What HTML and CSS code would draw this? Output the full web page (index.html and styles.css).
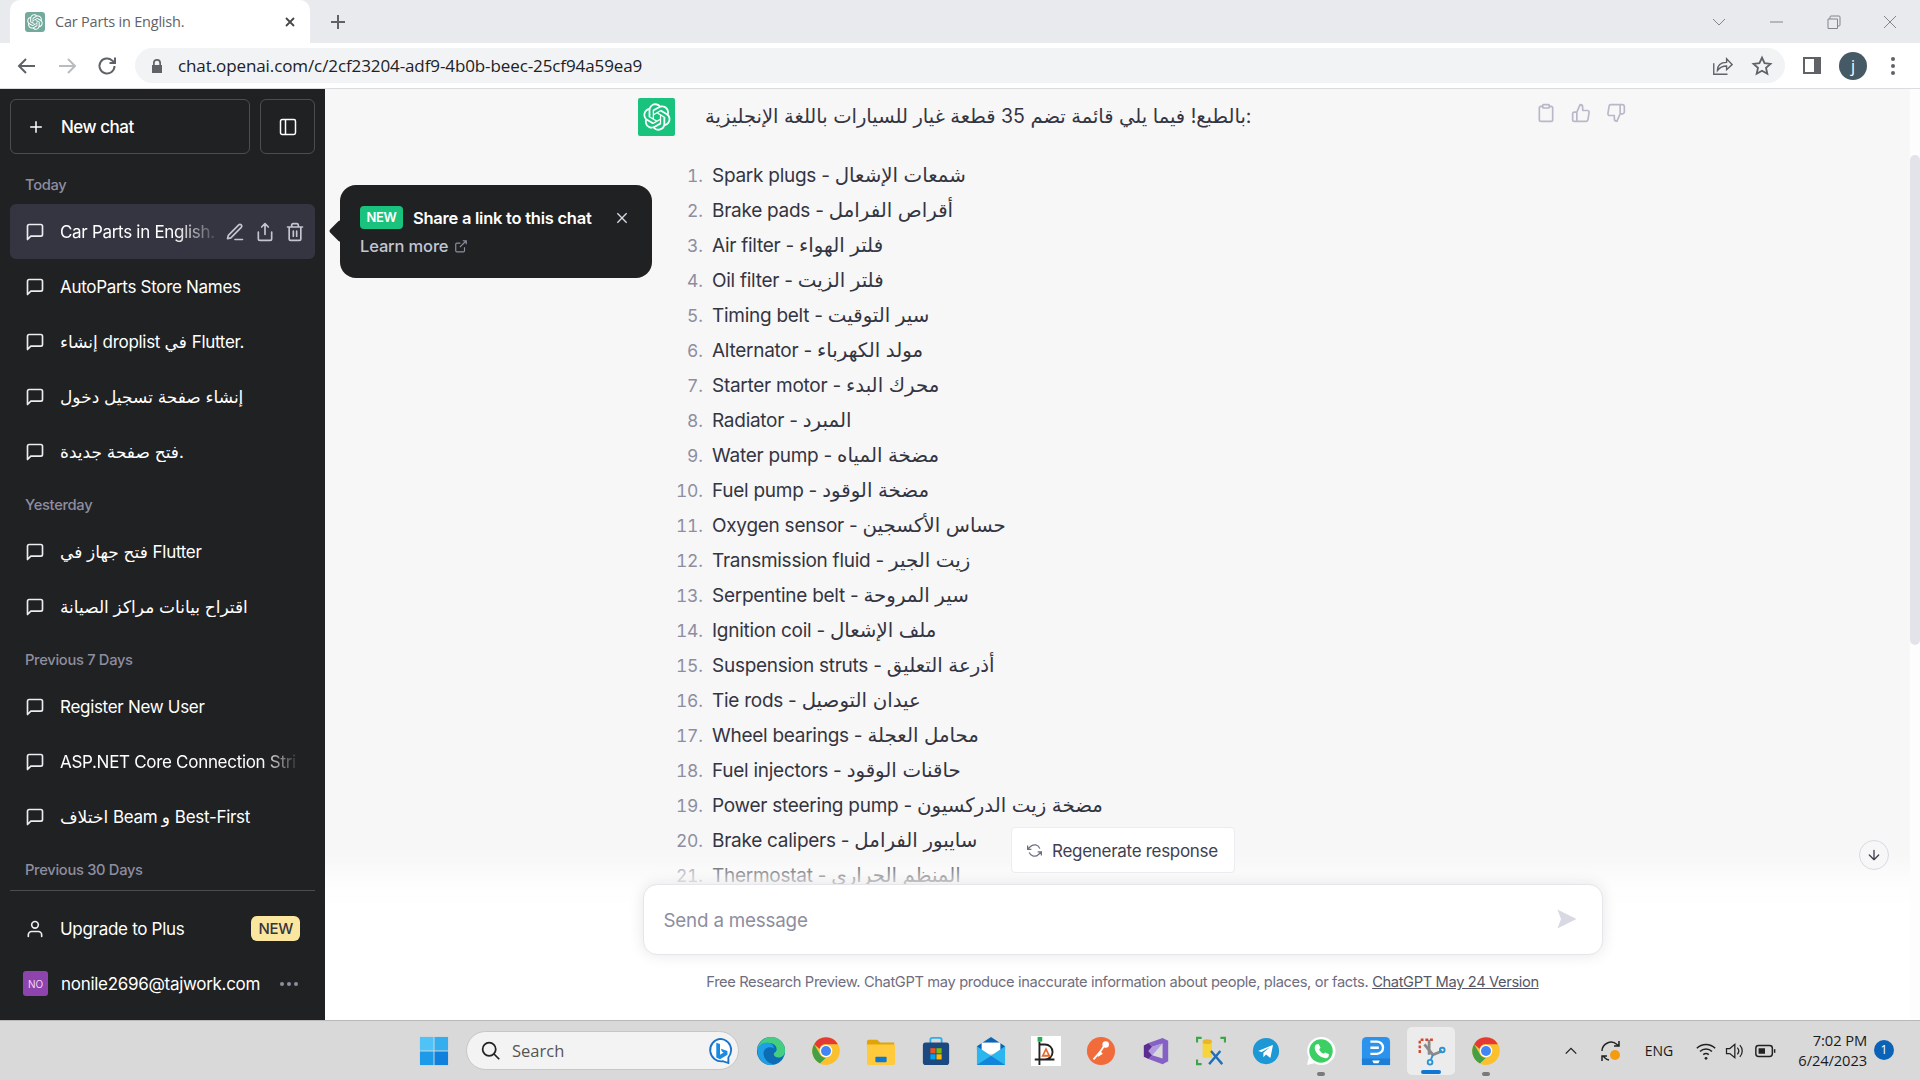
FILE: index.html
```html
<!DOCTYPE html>
<html lang="en">
<head>
<meta charset="utf-8">
<title>Car Parts in English.</title>
<link rel="stylesheet" href="styles.css">
</head>
<body>
<svg class="defs" width="0" height="0" aria-hidden="true">
  <symbol id="oai" viewBox="0 0 41 41"><path fill="currentColor" d="M37.5324 16.8707C37.9808 15.5241 38.1363 14.0974 37.9886 12.6859C37.8409 11.2744 37.3934 9.91076 36.676 8.68622C35.6126 6.83404 33.9882 5.3676 32.0373 4.4985C30.0864 3.62941 27.9098 3.40259 25.8215 3.85078C24.8796 2.7893 23.7219 1.94125 22.4257 1.36341C21.1295 0.785575 19.7249 0.491269 18.3058 0.500197C16.1708 0.495044 14.0893 1.16803 12.3614 2.42214C10.6335 3.67624 9.34853 5.44666 8.6917 7.47815C7.30085 7.76286 5.98686 8.3414 4.8377 9.17505C3.68854 10.0087 2.73073 11.0782 2.02839 12.312C0.956464 14.1591 0.498905 16.2988 0.721698 18.4228C0.944492 20.5467 1.83612 22.5449 3.268 24.1293C2.81966 25.4759 2.66413 26.9026 2.81182 28.3141C2.95951 29.7256 3.40701 31.0892 4.12437 32.3138C5.18791 34.1659 6.8123 35.6322 8.76321 36.5013C10.7141 37.3704 12.8907 37.5973 14.9789 37.1492C15.9208 38.2107 17.0786 39.0587 18.3747 39.6366C19.6709 40.2144 21.0755 40.5087 22.4946 40.4998C24.6307 40.5054 26.7133 39.8321 28.4418 38.5772C30.1704 37.3223 31.4556 35.5506 32.1119 33.5179C33.5027 33.2332 34.8167 32.6547 35.9659 31.821C37.115 30.9874 38.0728 29.9178 38.7752 28.684C39.8458 26.8371 40.3023 24.6979 40.0789 22.5748C39.8556 20.4517 38.9639 18.4544 37.5324 16.8707ZM22.4978 37.8849C20.7443 37.8874 19.0459 37.2733 17.6994 36.1501C17.7601 36.117 17.8666 36.0586 17.936 36.0161L25.9004 31.4156C26.1003 31.3019 26.2663 31.137 26.3813 30.9378C26.4964 30.7386 26.5563 30.5124 26.5549 30.2825V19.0542L29.9213 20.998C29.9389 21.0068 29.9541 21.0198 29.9656 21.0359C29.977 21.052 29.9842 21.0707 29.9867 21.0902V30.3889C29.9842 32.375 29.1946 34.2791 27.7909 35.6841C26.3872 37.0892 24.4838 37.8806 22.4978 37.8849ZM6.39227 31.0064C5.51397 29.4888 5.19742 27.7107 5.49804 25.9832C5.55718 26.0187 5.66048 26.0818 5.73461 26.1244L13.699 30.7248C13.8975 30.8408 14.1233 30.902 14.3532 30.902C14.583 30.902 14.8088 30.8408 15.0073 30.7248L24.731 25.1103V28.9979C24.7321 29.0177 24.7283 29.0376 24.7199 29.0556C24.7115 29.0736 24.6988 29.0893 24.6829 29.1012L16.6317 33.7497C14.9096 34.7416 12.8643 35.0097 10.9447 34.4954C9.02506 33.9811 7.38785 32.7263 6.39227 31.0064ZM4.29707 13.6194C5.17156 12.0998 6.55279 10.9364 8.19885 10.3327C8.19885 10.4013 8.19491 10.5228 8.19491 10.6071V19.808C8.19351 20.0378 8.25334 20.2638 8.36823 20.4629C8.48312 20.6619 8.64893 20.8267 8.84863 20.9404L18.5723 26.5542L15.206 28.4979C15.1894 28.5089 15.1703 28.5155 15.1505 28.5173C15.1307 28.5191 15.1107 28.516 15.0924 28.5082L7.04046 23.8557C5.32135 22.8601 4.06716 21.2235 3.55289 19.3046C3.03862 17.3858 3.30624 15.3413 4.29707 13.6194ZM31.955 20.0556L22.2312 14.4411L25.5976 12.4981C25.6142 12.4872 25.6333 12.4805 25.6531 12.4787C25.6729 12.4769 25.6928 12.4801 25.7111 12.4879L33.7631 17.1364C34.9967 17.849 36.0017 18.8982 36.6606 20.1613C37.3194 21.4244 37.6047 22.849 37.4832 24.2684C37.3617 25.6878 36.8382 27.0432 35.9743 28.1759C35.1103 29.3086 33.9415 30.1717 32.6047 30.6641C32.6047 30.5947 32.6047 30.4733 32.6047 30.3889V21.188C32.6066 20.9586 32.5474 20.7328 32.4332 20.5338C32.319 20.3348 32.154 20.1698 31.955 20.0556ZM35.3055 15.0128C35.2464 14.9765 35.1431 14.9142 35.069 14.8717L27.1045 10.2712C26.906 10.1554 26.6803 10.0943 26.4504 10.0943C26.2206 10.0943 25.9948 10.1554 25.7963 10.2712L16.0726 15.8858V11.9982C16.0715 11.9783 16.0753 11.9585 16.0837 11.9405C16.0921 11.9225 16.1048 11.9068 16.1207 11.8949L24.1719 7.25025C25.4053 6.53903 26.8158 6.19376 28.2383 6.25482C29.6608 6.31589 31.0364 6.78077 32.2044 7.59508C33.3723 8.40939 34.2842 9.53945 34.8334 10.8531C35.3826 12.1667 35.5464 13.6095 35.3055 15.0128ZM14.2424 21.9419L10.8752 19.9981C10.8576 19.9893 10.8423 19.9763 10.8309 19.9602C10.8195 19.9441 10.8122 19.9254 10.8098 19.9058V10.6071C10.8107 9.18295 11.2173 7.78848 11.9819 6.58696C12.7466 5.38544 13.8377 4.42659 15.1275 3.82264C16.4173 3.21869 17.8524 2.99464 19.2649 3.1767C20.6775 3.35876 22.0089 3.93941 23.1034 4.85067C23.0427 4.88379 22.937 4.94215 22.8668 4.98473L14.9024 9.58517C14.7025 9.69878 14.5366 9.86356 14.4215 10.0626C14.3065 10.2616 14.2466 10.4877 14.2479 10.7175L14.2424 21.9419ZM16.071 17.9991L20.4018 15.4978L24.7325 17.9975V22.9985L20.4018 25.4983L16.071 22.9985V17.9991Z"/></symbol>
  <symbol id="bubble" viewBox="0 0 24 24"><path fill="none" stroke="currentColor" stroke-width="2" stroke-linecap="round" stroke-linejoin="round" d="M21 15a2 2 0 0 1-2 2H7l-4 4V5a2 2 0 0 1 2-2h14a2 2 0 0 1 2 2z"/></symbol>
  <symbol id="chrome" viewBox="0 0 48 48"><circle cx="24" cy="24" r="22" fill="#fbc02d"/><path fill="#e53935" d="M24 2a22 22 0 0 1 19 11H24a11 11 0 0 0-10.500 7.500L5 13A22 22 0 0 1 24 2z"/><path fill="#43a047" d="M5 13l9.500 16.500A11 11 0 0 0 24 35l-9.500 9A22 22 0 0 1 5 13z"/><path fill="#fbc02d" d="M14.500 44l9.500-9a11 11 0 0 0 9.500-16.500H43A22 22 0 0 1 24 46a22 22 0 0 1-9.500-2z"/><circle cx="24" cy="24" r="10" fill="#fff"/><circle cx="24" cy="24" r="8" fill="#4285f4"/></symbol>
</svg>

<div class="app">
  <header class="tabstrip">
    <div class="tab">
      <span class="favicon"><svg class="favicon-svg"><use href="#oai"/></svg></span>
      <span class="tab-title">Car Parts in English.</span>
      <svg class="tab-x" viewBox="0 0 12 12"><path d="M2 2l8 8M10 2l-8 8"/></svg>
    </div>
    <svg class="tab-plus" viewBox="0 0 16 16"><path d="M8 1v14M1 8h14"/></svg>
    <div class="winctl">
      <svg class="wc" viewBox="0 0 16 16"><path d="M2 5l6 6 6-6"/></svg>
      <svg class="wc" viewBox="0 0 16 16"><path d="M2 8h13"/></svg>
      <svg class="wc" viewBox="0 0 16 16"><path d="M3 5h9.500v9.500H3zM5 5V3c0-.6.400-1 1-1h8c.6 0 1 .4 1 1v8c0 .6-.4 1-1 1h-1.500"/></svg>
      <svg class="wc" viewBox="0 0 16 16"><path d="M2 2l12 12M14 2L2 14"/></svg>
    </div>
  </header>

  <nav class="toolbar">
    <svg class="tb-ic" viewBox="0 0 24 24"><path d="M20 12H5M11 5l-7 7 7 7"/></svg>
    <svg class="tb-ic tb-ic-dim" viewBox="0 0 24 24"><path d="M4 12h15M13 5l7 7-7 7"/></svg>
    <svg class="tb-ic" viewBox="0 0 24 24"><path d="M19.500 12a7.500 7.500 0 1 1-2.300-5.400L20 9M20 3.500V9h-5.500"/></svg>
    <div class="omnibox">
      <svg class="lock" viewBox="0 0 16 16"><path d="M4 7V5a4 4 0 0 1 8 0v2h1v8H3V7zm1.700 0h4.600V5a2.300 2.300 0 0 0-4.600 0z"/></svg>
      <span class="url">chat.openai.com/c/2cf23204-adf9-4b0b-beec-25cf94a59ea9</span>
      <svg class="omni-ic" viewBox="0 0 24 24"><path d="M3 9v12h15M7 17c0-6 4-9 10-9V4l6 6.500L17 16v-4c-4.500 0-7.500 1.500-10 5z"/></svg>
      <svg class="omni-ic" viewBox="0 0 24 24"><path stroke-width="2" d="M12 3l2.800 6 6.400.7-4.800 4.300 1.400 6.500-5.800-3.300-5.800 3.300 1.400-6.500-4.800-4.300 6.400-.7z"/></svg>
    </div>
    <span class="panel-ic"><span class="panel-ic-in"></span></span>
    <span class="avatar">j</span>
    <span class="kebab"><i></i><i></i><i></i></span>
  </nav>

  <div class="workspace">
    <aside class="sidebar">
      <div class="side-top">
        <button class="btn-new"><svg class="ic-s" viewBox="0 0 24 24"><path d="M12 5v14M5 12h14"/></svg>New chat</button>
        <button class="btn-toggle"><svg class="ic-s" viewBox="0 0 24 24"><rect x="3" y="3" width="18" height="18" rx="2"/><path d="M9 3v18"/></svg></button>
      </div>
      <div class="history">
        <div class="label label-first">Today</div>
        <a class="row row-active"><svg class="ic-b"><use href="#bubble"/></svg><span class="row-text row-fade-active">Car Parts in English.</span>
          <span class="row-acts">
            <svg class="ic-a" viewBox="0 0 24 24"><path d="M12 21h9M16.500 3.500a2.100 2.100 0 0 1 3 3L7 19l-4 1 1-4z"/></svg>
            <svg class="ic-a" viewBox="0 0 24 24"><path d="M4 12v8a2 2 0 0 0 2 2h12a2 2 0 0 0 2-2v-8M16 6l-4-4-4 4M12 2v13"/></svg>
            <svg class="ic-a" viewBox="0 0 24 24"><path d="M3 6h18M19 6v14a2 2 0 0 1-2 2H7a2 2 0 0 1-2-2V6m3 0V4a2 2 0 0 1 2-2h4a2 2 0 0 1 2 2v2M10 11v6M14 11v6"/></svg>
          </span></a>
        <a class="row"><svg class="ic-b"><use href="#bubble"/></svg><span class="row-text">AutoParts Store Names</span></a>
        <a class="row"><svg class="ic-b"><use href="#bubble"/></svg><span class="row-text">إنشاء droplist في Flutter.</span></a>
        <a class="row"><svg class="ic-b"><use href="#bubble"/></svg><span class="row-text">إنشاء صفحة تسجيل دخول</span></a>
        <a class="row"><svg class="ic-b"><use href="#bubble"/></svg><span class="row-text">فتح صفحة جديدة.</span></a>
        <div class="label">Yesterday</div>
        <a class="row"><svg class="ic-b"><use href="#bubble"/></svg><span class="row-text">فتح جهاز في Flutter</span></a>
        <a class="row"><svg class="ic-b"><use href="#bubble"/></svg><span class="row-text">اقتراح بيانات مراكز الصيانة</span></a>
        <div class="label">Previous 7 Days</div>
        <a class="row"><svg class="ic-b"><use href="#bubble"/></svg><span class="row-text">Register New User</span></a>
        <a class="row"><svg class="ic-b"><use href="#bubble"/></svg><span class="row-text row-fade">ASP.NET Core Connection Stri</span></a>
        <a class="row"><svg class="ic-b"><use href="#bubble"/></svg><span class="row-text">اختلاف Beam و Best-First</span></a>
        <div class="label">Previous 30 Days</div>
      </div>
      <div class="side-foot">
        <a class="row"><svg class="ic-b" viewBox="0 0 24 24"><path fill="none" stroke="currentColor" stroke-width="2" stroke-linecap="round" d="M20 21v-2a4 4 0 0 0-4-4H8a4 4 0 0 0-4 4v2"/><circle cx="12" cy="7" r="4" fill="none" stroke="currentColor" stroke-width="2"/></svg><span class="row-text">Upgrade to Plus</span><span class="badge-plus">NEW</span></a>
        <a class="row row-user"><span class="user-pic">NO</span><span class="row-text">nonile2696@tajwork.com</span><span class="dots"><i></i><i></i><i></i></span></a>
      </div>
    </aside>

    <main class="main">
      <div class="thread">
        <div class="message">
          <span class="msg-logo"><svg class="msg-logo-svg"><use href="#oai"/></svg></span>
          <div class="msg-body">
            <p class="msg-lead">بالطبع! فيما يلي قائمة تضم 35 قطعة غيار للسيارات باللغة الإنجليزية:</p>
            <ol class="parts">
              <li>Spark plugs - <span class="ar">شمعات الإشعال</span></li>
              <li>Brake pads - <span class="ar">أقراص الفرامل</span></li>
              <li>Air filter - <span class="ar">فلتر الهواء</span></li>
              <li>Oil filter - <span class="ar">فلتر الزيت</span></li>
              <li>Timing belt - <span class="ar">سير التوقيت</span></li>
              <li>Alternator - <span class="ar">مولد الكهرباء</span></li>
              <li>Starter motor - <span class="ar">محرك البدء</span></li>
              <li>Radiator - <span class="ar">المبرد</span></li>
              <li>Water pump - <span class="ar">مضخة المياه</span></li>
              <li>Fuel pump - <span class="ar">مضخة الوقود</span></li>
              <li>Oxygen sensor - <span class="ar">حساس الأكسجين</span></li>
              <li>Transmission fluid - <span class="ar">زيت الجير</span></li>
              <li>Serpentine belt - <span class="ar">سير المروحة</span></li>
              <li>Ignition coil - <span class="ar">ملف الإشعال</span></li>
              <li>Suspension struts - <span class="ar">أذرعة التعليق</span></li>
              <li>Tie rods - <span class="ar">عيدان التوصيل</span></li>
              <li>Wheel bearings - <span class="ar">محامل العجلة</span></li>
              <li>Fuel injectors - <span class="ar">حاقنات الوقود</span></li>
              <li>Power steering pump - <span class="ar">مضخة زيت الدركسيون</span></li>
              <li>Brake calipers - <span class="ar">سايبور الفرامل</span></li>
              <li>Thermostat - <span class="ar">المنظم الحراري</span></li>
            </ol>
          </div>
          <div class="msg-acts">
            <svg class="ic-m" viewBox="0 0 24 24"><path d="M16 4h2a2 2 0 0 1 2 2v14a2 2 0 0 1-2 2H6a2 2 0 0 1-2-2V6a2 2 0 0 1 2-2h2"/><rect x="8" y="2" width="8" height="4" rx="1"/></svg>
            <svg class="ic-m" viewBox="0 0 24 24"><path d="M14 9V5a3 3 0 0 0-3-3l-4 9v11h11.300a2 2 0 0 0 2-1.700l1.400-9a2 2 0 0 0-2-2.300zM7 22H4a2 2 0 0 1-2-2v-7a2 2 0 0 1 2-2h3"/></svg>
            <svg class="ic-m" viewBox="0 0 24 24"><path d="M10 15v4a3 3 0 0 0 3 3l4-9V2H5.700a2 2 0 0 0-2 1.700l-1.400 9a2 2 0 0 0 2 2.300zM17 2h2.700A2.300 2.300 0 0 1 22 4v7a2.300 2.300 0 0 1-2.300 2H17"/></svg>
          </div>
        </div>
      </div>
      <div class="scrolltrack"><div class="scrollthumb"></div></div>

      <div class="tip">
        <div class="tip-head"><span class="tip-new">NEW</span><span class="tip-title">Share a link to this chat</span>
          <svg class="tip-x" viewBox="0 0 24 24"><path d="M5 5l14 14M19 5L5 19"/></svg></div>
        <div class="tip-more">Learn more <svg class="tip-ext" viewBox="0 0 24 24"><path d="M18 14v6a2 2 0 0 1-2 2H5a2 2 0 0 1-2-2V9a2 2 0 0 1 2-2h6M15 3h6v6M10 14L21 3"/></svg></div>
      </div>

      <button class="to-bottom"><svg class="ic-d" viewBox="0 0 24 24"><path d="M12 5v14M19 12l-7 7-7-7"/></svg></button>

      <div class="composer">
        <button class="regen"><svg class="ic-r" viewBox="0 0 24 24"><path d="M1 4v6h6M23 20v-6h-6M20.500 9A9 9 0 0 0 5.600 5.600L1 10m22 4l-4.600 4.400A9 9 0 0 1 3.500 15"/></svg>Regenerate response</button>
        <div class="input">
          <span class="placeholder">Send a message</span>
          <svg class="send" viewBox="0 0 20 20"><path d="M2 2l16 8-16 8 3-8z"/></svg>
        </div>
        <p class="disclaimer">Free Research Preview. ChatGPT may produce inaccurate information about people, places, or facts. <u>ChatGPT May 24 Version</u></p>
      </div>
    </main>
  </div>

  <footer class="taskbar">
    <span class="cell">
      <svg class="ti" viewBox="0 0 32 32"><g fill="#1c9fe8"><rect x="1" y="1" width="14.500" height="14.500" fill="#4fc3f7"/><rect x="16.500" y="1" width="14.500" height="14.500" fill="#35aef0"/><rect x="1" y="16.500" width="14.500" height="14.500" fill="#1e9be8"/><rect x="16.500" y="16.500" width="14.500" height="14.500" fill="#0f80dc"/></g></svg>
    </span>
    <div class="search">
      <svg class="search-ic" viewBox="0 0 24 24"><circle cx="10.500" cy="10.500" r="7.500"/><path d="M16 16l6 6"/></svg>
      <span class="search-text">Search</span>
      <svg class="bing" viewBox="0 0 28 30"><path fill="#fff" stroke="#1a73c9" stroke-width="2" d="M14 2a12 12 0 0 1 12 12 13 13 0 0 1-3 8v6l-6-2a12 12 0 1 1-3-24z"/><path fill="#1a8be0" d="M10 6l4 1.500V19l4-2.500-2-1-1-3 7 2.500v4l-8 5-4-2z"/></svg>
    </div>
    <span class="cell"><svg class="ti" viewBox="0 0 32 32"><circle cx="16" cy="16" r="15" fill="#0c6db5"/><path fill="#43cf7f" d="M16 1a15 15 0 0 1 15 15c0 4-3 7-7 7-3 0-5-1.500-5-3.500 0-2.500 3-2 3-5.500 0-4-4-6.500-8-6.500-6 0-10 4-13 8C2 8 8 1 16 1z"/><path fill="#1f9fe5" d="M1.500 14C3 9 8 7 12 7c4 0 7 3 7 6-4-2-10-1-11 5 0 6 5 12 12 12a15 15 0 0 1-4 1C8 31 1 24 1.500 14z"/></svg></span>
    <span class="cell"><svg class="ti"><use href="#chrome"/></svg></span>
    <span class="cell"><svg class="ti" viewBox="0 0 32 32"><path fill="#e0a30b" d="M1 6a2 2 0 0 1 2-2h9l3 3h15v4H1z"/><path fill="#ffcb3d" d="M1 9h30v20a2 2 0 0 1-2 2H3a2 2 0 0 1-2-2z"/><rect x="10" y="22" width="12" height="6" rx="1" fill="#0f78d4"/></svg></span>
    <span class="cell"><svg class="ti" viewBox="0 0 32 32"><path fill="none" stroke="#2fb0ea" stroke-width="2" d="M10 8V4a2 2 0 0 1 2-2h8a2 2 0 0 1 2 2v4"/><rect x="2" y="7" width="28" height="24" rx="3" fill="#1c4a80"/><rect x="10" y="13" width="5.500" height="5.500" fill="#f25022"/><rect x="16.500" y="13" width="5.500" height="5.500" fill="#7fba00"/><rect x="10" y="19.500" width="5.500" height="5.500" fill="#00a4ef"/><rect x="16.500" y="19.500" width="5.500" height="5.500" fill="#ffb900"/></svg></span>
    <span class="cell"><svg class="ti" viewBox="0 0 32 32"><path fill="#0a65b3" d="M16 1l15 10v4H1v-4z"/><path fill="#fff" d="M6 7h20v12H6z"/><path fill="#2bb6f0" d="M1 11l15 10 15-10v20H1z"/><path fill="#1285d8" d="M1 31l15-10 15 10z"/></svg></span>
    <span class="cell"><svg class="ti" viewBox="0 0 32 32"><rect width="32" height="32" fill="#fff"/><rect x="7" y="1" width="5" height="5" fill="#22b14c"/><path fill="none" stroke="#222" stroke-width="2" d="M9 6v25M4 25h21M9 9h6a8 8 0 0 1 0 16"/><path fill="#e8692b" d="M16 12l5 10H11z"/><path fill="#fff" d="M16 16l2 4h-4z"/></svg></span>
    <span class="cell"><svg class="ti" viewBox="0 0 32 32"><circle cx="16" cy="16" r="15" fill="#f26b3a"/><path fill="none" stroke="#fff" stroke-width="2" d="M8 25l7-8 4-6"/><circle cx="21" cy="9" r="3.500" fill="#fff"/><path fill="#fff" d="M12 21l3-5 3 3-5 3z"/></svg></span>
    <span class="cell"><svg class="ti" viewBox="0 0 32 32"><path fill="#5c2d91" d="M3 10l5-2.500 4 4L8 16l4 4.500-4 4-5-2.500z"/><path fill="#8661c5" d="M8 7.500L23 2l6 3v22l-6 3L8 24.500l4-4L23 24V8L12 11.500z"/><path fill="#b09ae0" d="M12 11.500L23 8 12 20.500 8 16z"/></svg></span>
    <span class="cell"><svg class="ti" viewBox="0 0 32 32"><path fill="none" stroke="#3fa54a" stroke-width="2.500" d="M1 7V2h5M26 2h5v5M1 25v5h5"/><rect x="7" y="6" width="10" height="17" fill="#f7d33c"/><ellipse cx="12" cy="6" rx="5" ry="2.500" fill="#e9b62a"/><path fill="none" stroke="#1f6fb5" stroke-width="2.500" d="M14 30l12-14M28 30L16 16"/></svg></span>
    <span class="cell"><svg class="ti ti-sm" viewBox="0 0 32 32"><circle cx="16" cy="16" r="15" fill="#1d98d5"/><path fill="#fff" d="M7 16l17-7-3 15-5-4-3 3v-5l7-6-9 5z"/></svg></span>
    <span class="cell cell-run"><svg class="ti" viewBox="0 0 32 32"><path fill="#fff" d="M16 1a15 15 0 0 0-13 22l-2 8 8-2A15 15 0 1 0 16 1z"/><circle cx="16" cy="16" r="12.500" fill="#3ccf64"/><path fill="#fff" d="M11 9l2.500-.5 2 4-1.500 2c1 2 2.500 3.500 4.500 4.500l2-1.500 4 2-.5 2.500c-1 1.500-3 2-5 1.300C14 21.500 10.500 18 9.500 14c-.5-2 0-4 1.500-5z"/></svg></span>
    <span class="cell"><svg class="ti" viewBox="0 0 32 32"><rect x="1" y="1" width="30" height="30" rx="5" fill="#2b93ee"/><path fill="none" stroke="#fff" stroke-width="2.500" d="M10 6h7a6 6 0 0 1 0 13h-7M10 12.500h9"/><rect x="1" y="24" width="30" height="7" fill="#1d7ed4"/><path fill="#fff" d="M12 26h8l-1.500 3h-5z"/></svg></span>
    <span class="cell cell-active"><svg class="ti" viewBox="0 0 32 32"><path fill="none" stroke="#d8432a" stroke-width="2.500" stroke-dasharray="3 2" d="M4 18V4h14"/><path fill="none" stroke="#8a8a8a" stroke-width="3" d="M14 4v16"/><path fill="none" stroke="#8a8a8a" stroke-width="3" d="M9 9l9 11 10-4"/><path fill="none" stroke="#2a93d5" stroke-width="2" d="M18 20l-2 5"/><circle cx="15" cy="28" r="2.500" fill="none" stroke="#2a93d5" stroke-width="2"/><circle cx="28" cy="15" r="2.500" fill="none" stroke="#2a93d5" stroke-width="2"/></svg></span>
    <span class="cell cell-run"><svg class="ti"><use href="#chrome"/></svg></span>

    <div class="tray">
      <svg class="tray-caret" viewBox="0 0 16 16"><path d="M2 11l6-6 6 6"/></svg>
      <span class="tray-sync"><svg class="tray-sync-ic" viewBox="0 0 24 24"><path d="M3 12a9 9 0 0 1 15-6.500L20 7M20 2v5h-5M3 22v-5h5M4 17l2 2a8 8 0 0 0 4 2"/><circle cx="16" cy="16" r="5" class="sync-dot"/></svg></span>
      <span class="tray-lang">ENG</span>
      <svg class="tray-wifi" viewBox="0 0 24 24"><path d="M2 9a14 14 0 0 1 20 0M5.500 12.500a9 9 0 0 1 13 0M9 16a4.500 4.500 0 0 1 6 0"/><circle cx="12" cy="20" r="1.500" class="tray-fill"/></svg>
      <svg class="tray-vol" viewBox="0 0 24 24"><path d="M3 9v6h4l6 5V4L7 9zM16 8a6 6 0 0 1 0 8M19 5a10 10 0 0 1 0 14"/></svg>
      <svg class="tray-batt" viewBox="0 0 24 24"><rect x="2" y="6" width="18" height="12" rx="3"/><rect x="5" y="9" width="7" height="6" class="tray-fill"/><path d="M22.500 10v4"/></svg>
      <div class="clock"><span>7:02 PM</span><span>6/24/2023</span></div>
      <span class="notif">1</span>
    </div>
  </footer>
</div>
</body>
</html>
```

FILE: styles.css
```css
* { box-sizing: border-box; }
html, body { margin: 0; height: 100%; overflow: hidden; }
body { font-family: Inter, "DejaVu Sans", sans-serif; color: #343541; }
.defs { position: absolute; }
button { font: inherit; cursor: pointer; }
p { margin: 0; }

.app { display: flex; flex-direction: column; width: 1920px; height: 1080px; overflow: hidden; }

/* browser chrome */
.tabstrip { height: 43px; flex: none; display: flex; align-items: center; padding-left: 10px; background: #e8eaed; }
.tab { width: 300px; height: 43px; display: flex; align-items: center; padding: 0 14px 0 15px; background: #fff; border-radius: 10px 10px 0 0; }
.favicon { width: 20px; height: 20px; border-radius: 3px; background: #74aa9c; color: #fff; display: flex; align-items: center; justify-content: center; }
.favicon-svg { width: 16px; height: 16px; }
.tab-title { flex: 1; margin-left: 10px; font: 14.500px "Open Sans", sans-serif; color: #5f6368; letter-spacing: -.2px; }
.tab-x { width: 12px; height: 12px; fill: none; stroke: #45474a; stroke-width: 1.800; }
.tab-plus { width: 16px; height: 16px; margin-left: 20px; fill: none; stroke: #5f6368; stroke-width: 2; }
.winctl { margin-left: auto; display: flex; gap: 41px; padding-right: 22px; align-items: center; }
.wc { width: 16px; height: 16px; fill: none; stroke: #80868b; stroke-width: 1; }

.toolbar { height: 46px; flex: none; display: flex; align-items: center; background: #fff; border-bottom: 1px solid #dadce0; padding: 0 0 0 15px; }
.tb-ic { width: 24px; height: 24px; margin-right: 16px; fill: none; stroke: #5f6368; stroke-width: 2; flex: none; }
.tb-ic-dim { stroke: #b9bcc0; }
.omnibox { width: 1650px; margin-left: 0; height: 35px; border-radius: 18px; background: #f1f3f4; display: flex; align-items: center; padding: 0 12px 0 14px; flex: none; }
.lock { width: 16px; height: 16px; fill: #5f6368; flex: none; }
.url { flex: 1; margin-left: 13px; font: 17px "Open Sans", sans-serif; color: #202124; letter-spacing: -.1px; }
.omni-ic { width: 22px; height: 22px; margin-left: 18px; fill: none; stroke: #5f6368; stroke-width: 1.500; flex: none; }
.panel-ic { width: 18px; height: 17px; margin-left: 18px; background: #5f6368; padding: 2px 7px 2px 2px; flex: none; display: block; }
.panel-ic-in { display: block; width: 100%; height: 100%; background: #fff; }
.avatar { width: 28px; height: 28px; margin-left: 18px; border-radius: 50%; background: #455a64; color: #fff; display: flex; align-items: center; justify-content: center; font: 16px "Open Sans", sans-serif; flex: none; }
.kebab { width: 4px; margin-left: 24px; display: flex; flex-direction: column; gap: 3px; flex: none; }
.kebab i { width: 4px; height: 4px; border-radius: 50%; background: #5f6368; }

/* layout */
.workspace { flex: 1; display: flex; min-height: 0; }
.sidebar { width: 325px; flex: none; background: #202123; color: #ececf1; padding: 10px 10px 9px; display: flex; flex-direction: column; font-size: 17px; }
.side-top { display: flex; gap: 10px; flex: none; }
.btn-new, .btn-toggle { height: 55px; background: transparent; border: 1px solid rgba(255,255,255,.2); border-radius: 6px; color: #fff; display: flex; align-items: center; }
.btn-new { width: 240px; padding: 0 15px; gap: 15px; font-size: 17px; font-weight: 500; letter-spacing: -.5px; }
.btn-toggle { width: 55px; justify-content: center; padding: 0; }
.ic-s { width: 20px; height: 20px; fill: none; stroke: #fff; stroke-width: 1.800; flex: none; }

.history { flex: 1; overflow: hidden; min-height: 0; }
.label { height: 45px; padding: 16px 15px 0; font-size: 14.700px; font-weight: 500; line-height: 20px; color: #8e8ea0; letter-spacing: -.3px; }
.label-first { margin-top: 5px; }
.row { height: 55px; display: flex; align-items: center; padding: 0 15px; gap: 15px; border-radius: 6px; color: #ececf1; }
.row-active { background: #343541; }
.ic-b { width: 20px; height: 20px; flex: none; color: #ececf1; }
.row-text { flex: 1; min-width: 0; white-space: nowrap; overflow: hidden; letter-spacing: -.3px; color: #fff; font-weight: 400; }
.row-fade { -webkit-mask-image: linear-gradient(90deg, #000 84%, transparent 100%); mask-image: linear-gradient(90deg, #000 84%, transparent 100%); }
.row-fade-active { -webkit-mask-image: linear-gradient(90deg, #000 72%, transparent); mask-image: linear-gradient(90deg, #000 72%, transparent); }
.row-acts { display: flex; gap: 10px; margin-left: -10px; margin-right: -5px; flex: none; }
.ic-a { width: 20px; height: 20px; fill: none; stroke: #c5c5d2; stroke-width: 2; stroke-linecap: round; stroke-linejoin: round; }

.side-foot { flex: none; border-top: 1px solid rgba(255,255,255,.2); padding-top: 10px; }
.badge-plus { padding: 2px 7px; border-radius: 6px; background: #fae69e; color: #343541; font-size: 15px; line-height: 21px; font-weight: 500; letter-spacing: -.3px; }
.row-user { gap: 13px; padding-left: 13px; }
.user-pic { width: 25px; height: 25px; flex: none; border-radius: 3px; background: #8e44ad; color: #f3d8f7; font-size: 10px; display: flex; align-items: center; justify-content: center; }
.dots { display: flex; gap: 3px; flex: none; margin-right: 2px; }
.dots i { width: 4px; height: 4px; border-radius: 50%; background: #8e8ea0; }

.main { flex: 1; position: relative; display: flex; background: #f7f7f8; min-width: 0; }
.thread { flex: 1; min-width: 0; overflow: hidden; padding: 9px 0 0 313px; }
.message { display: flex; width: 988px; }
.msg-logo { width: 37px; height: 38px; flex: none; border-radius: 2px; background: #19c37d; color: #fff; display: flex; align-items: center; justify-content: center; margin-right: 30px; }
.msg-logo-svg { width: 28px; height: 28px; }
.msg-body { flex: 1; font-size: 19px; line-height: 35px; color: #343541; letter-spacing: -.27px; }
.msg-lead { height: 35px; padding-top: 1px; font-size: 19.500px; letter-spacing: 0; }
.parts { margin: 25px 0 0; padding: 0 0 0 2px; }
.parts li { height: 35px; padding-left: 5px; }
.parts li::marker { color: #8e8ea0; font-size: 17.500px; }
.ar { font-size: 19.800px; letter-spacing: 0; }
.msg-acts { display: flex; gap: 15px; padding-top: 5px; flex: none; height: 30px; }
.ic-m { width: 20px; height: 20px; fill: none; stroke: #b8b8c8; stroke-width: 2; stroke-linecap: round; stroke-linejoin: round; }

.scrolltrack { width: 10px; flex: none; background: #fdfdfd; padding-top: 66px; }
.scrollthumb { height: 490px; border-radius: 5px; background: #e3e3ea; }

.tip { position: absolute; left: 15px; top: 96px; width: 312px; height: 93px; border-radius: 16px; background: #202123; color: #fff; padding: 21px 20px 0; font-size: 16.500px; }
.tip::before { content: ""; position: absolute; left: -8px; top: 38px; width: 16px; height: 16px; background: #202123; transform: rotate(45deg); border-radius: 2px; }
.tip-head { display: flex; align-items: center; height: 23px; }
.tip-new { width: 43px; height: 23px; border-radius: 4px; background: #19c37d; font-size: 13px; font-weight: 600; text-align: center; line-height: 23px; letter-spacing: -.3px; }
.tip-title { margin-left: 10px; font-weight: 600; letter-spacing: -.25px; white-space: nowrap; }
.tip-x { width: 16px; height: 16px; margin-left: auto; margin-right: 2px; fill: none; stroke: #d9d9e3; stroke-width: 2; }
.tip-more { margin-top: 5px; color: #c5c5d2; font-size: 16.500px; line-height: 24px; letter-spacing: -.15px; font-weight: 500; display: flex; align-items: center; gap: 6px; }
.tip-ext { width: 14px; height: 14px; fill: none; stroke: #8e8ea0; stroke-width: 2; }

.to-bottom { position: absolute; left: 1534px; top: 751px; width: 30px; height: 30px; z-index: 2; border-radius: 50%; border: 1px solid #d9d9e3; background: #f7f7f8; padding: 0; display: flex; align-items: center; justify-content: center; }
.ic-d { width: 16px; height: 16px; fill: none; stroke: #40414f; stroke-width: 2; stroke-linecap: round; stroke-linejoin: round; }

.composer { position: absolute; left: 0; right: 10px; bottom: 0; height: 193px; display: flex; flex-direction: column; align-items: center; background: linear-gradient(180deg, rgba(247,247,248,0) 0, rgba(247,247,248,0) 14%, rgba(255,255,255,.8) 30%, #fff 42%); padding-left: 10px; }
.regen { height: 46px; width: 224px; flex: none; background: #fff; border: 1px solid #ececf1; border-radius: 4px; color: #40414f; font-size: 17px; letter-spacing: -.3px; display: flex; align-items: center; justify-content: center; gap: 10px; padding: 1px 0 0; }
.ic-r { width: 15px; height: 15px; fill: none; stroke: #6e6e80; stroke-width: 2; flex: none; }
.input { width: 960px; height: 71px; margin-top: 11px; flex: none; background: #fff; border-radius: 14px; border: 1px solid #e5e5ea; box-shadow: 0 0 15px rgba(0,0,0,.1); display: flex; align-items: center; padding: 0 23px 1px 20px; }
.placeholder { flex: 1; font-size: 18.800px; color: #8e8ea0; letter-spacing: -.2px; padding-top: 3px; }
.send { width: 24px; height: 24px; fill: #d9d9e3; }
.disclaimer { margin-top: 17px; font-size: 14.700px; line-height: 20px; color: #6e6e80; letter-spacing: -.37px; white-space: nowrap; }
.disclaimer u { color: #565869; }

/* taskbar */
.taskbar { height: 60px; flex: none; display: flex; align-items: center; padding-left: 410px; gap: 7px; background: #d9d9d9; border-top: 1px solid #b9b9b9; }
.cell { width: 48px; height: 48px; flex: none; display: flex; align-items: center; justify-content: center; position: relative; border-radius: 5px; }
.ti { width: 30px; height: 30px; }
.ti-sm { width: 28px; height: 28px; }
.cell-run::after, .cell-active::after { content: ""; position: absolute; bottom: -1px; left: 50%; transform: translateX(-50%); width: 8px; height: 4px; border-radius: 2px; background: #7a7a7a; }
.cell-active { background: #ececec; }
.cell-active::after { width: 20px; background: #0f78d4; bottom: 1px; }
.search { width: 273px; height: 39px; flex: none; margin: 0 1px; border-radius: 20px; background: #f3f3f3; border: 1px solid #c6c6c6; display: flex; align-items: center; padding: 0 5px 0 13px; }
.search-ic { width: 21px; height: 21px; fill: none; stroke: #222; stroke-width: 2; flex: none; }
.search-text { flex: 1; margin-left: 11px; font: 16.500px "Open Sans", sans-serif; color: #555; }
.bing { width: 26px; height: 28px; flex: none; }
.tray { display: flex; align-items: center; margin-left: 38px; color: #1a1a1a; }
.tray-caret { width: 14px; height: 14px; margin: 0 9px; fill: none; stroke: #222; stroke-width: 1.500; flex: none; }
.tray-sync { width: 48px; display: flex; justify-content: center; flex: none; }
.tray-sync-ic { width: 24px; height: 24px; fill: none; stroke: #222; stroke-width: 1.500; }
.sync-dot { fill: #f39c12; stroke: none; }
.tray-lang { width: 48px; text-align: center; font: 14px "Open Sans", sans-serif; flex: none; }
.tray-wifi { width: 22px; height: 22px; margin-left: 12px; margin-right: 7px; fill: none; stroke: #222; stroke-width: 1.600; flex: none; }
.tray-fill { fill: #222; stroke: none; }
.tray-vol { width: 20px; height: 20px; margin-right: 10px; fill: none; stroke: #222; stroke-width: 1.500; flex: none; }
.tray-batt { width: 22px; height: 22px; margin-right: 5px; fill: none; stroke: #222; stroke-width: 1.600; flex: none; }
.clock { width: 86px; padding-bottom: 2px; display: flex; flex-direction: column; align-items: flex-end; font: 14.700px/20px "Open Sans", sans-serif; letter-spacing: -.1px; flex: none; }
.notif { width: 20px; height: 20px; margin-left: 7px; margin-bottom: 2px; border-radius: 50%; background: #0b63b8; color: #fff; font: 12px/20px "Open Sans", sans-serif; text-align: center; flex: none; }
```
